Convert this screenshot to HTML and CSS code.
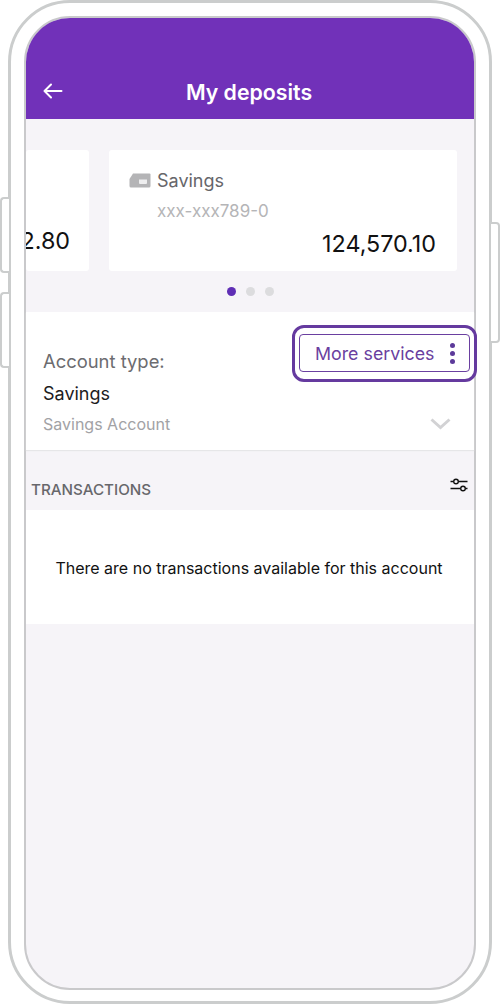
FILE: index.html
```html
<!DOCTYPE html>
<html lang="en">
<head>
  <meta charset="UTF-8" />
  <meta name="viewport" content="width=device-width, initial-scale=1" />
  <title>My deposits</title>
  <link rel="stylesheet" href="styles.css">
</head>
<body>
  <div class="phone">
    <span class="side-btn side-left-1"></span>
    <span class="side-btn side-left-2"></span>
    <span class="side-btn side-right"></span>

    <div class="screen">
      <div class="header">
        <svg class="back" width="20" height="16" viewBox="0 0 20 16" fill="none" stroke="#fff" stroke-width="2" stroke-linecap="round" stroke-linejoin="round">
          <path d="M1.5 8H18.5M8 1.5L1.5 8L8 14.5" />
        </svg>
        <div class="title">My deposits</div>
      </div>

      <div class="carousel">
        <div class="card card-prev">
          <div class="amount">2.80</div>
        </div>
        <div class="card card-main">
          <div class="card-name">
            <svg width="22" height="15" viewBox="0 0 22 15">
              <path d="M4 0.5H20.5Q21.5 0.5 21.5 1.5V13Q21.5 14.5 20 14.5H2Q0.5 14.5 0.5 13V6Z" fill="#b4b4b6" />
              <path d="M10 6.5H18V10Q18 11 17 11H11Q10 11 10 10Z" fill="#eeeeef" />
            </svg>
            <span>Savings</span>
          </div>
          <div class="card-number">xxx-xxx789-0</div>
          <div class="amount amount-main">124,570.10</div>
        </div>
      </div>

      <div class="dots">
        <span class="dot dot-active"></span>
        <span class="dot"></span>
        <span class="dot"></span>
      </div>

      <div class="account">
        <div class="account-info">
          <div class="account-label">Account type:</div>
          <div class="account-value">Savings</div>
          <div class="account-sub">Savings Account</div>
        </div>
        <div class="account-side">
          <button class="more-btn">
            More services
            <span class="kebab"><i></i><i></i><i></i></span>
          </button>
          <svg class="chevron" width="21" height="12" viewBox="0 0 21 12" fill="none" stroke="#d2d2d4" stroke-width="3">
            <path d="M1.5 1.5L10.5 9.5L19.5 1.5" />
          </svg>
        </div>
      </div>

      <div class="tx-head">
        <span>TRANSACTIONS</span>
        <svg width="18" height="14" viewBox="0 0 18 14" fill="none" stroke="#111" stroke-width="1.4">
          <path d="M0.5 3.5H3.5M8.5 3.5H17.5M0.5 10.5H10.5M15.5 10.5H17.5" />
          <circle cx="6" cy="3.5" r="2.3" />
          <circle cx="13" cy="10.5" r="2.3" />
        </svg>
      </div>

      <div class="tx-empty">There are no transactions available for this account</div>
    </div>
  </div>
</body>
</html>
```

FILE: styles.css
```css
body {
  margin: 0;
  background: #fff;
  font-family: 'Inter', 'Liberation Sans', sans-serif;
}
.phone {
  position: relative;
  box-sizing: border-box;
  width: 484px;
  height: 1004px;
  margin: 0 8px;
  padding: 13px 13px 11px;
  border: 3px solid #cbcdcd;
  border-radius: 62px;
}
.side-btn {
  position: absolute;
  width: 7px;
  border: 2px solid #cbcdcd;
  background: #fff;
}
.side-left-1,
.side-left-2 {
  left: -11px;
  height: 72px;
  border-right: none;
  border-radius: 4px 0 0 4px;
}
.side-left-1 { top: 194px; }
.side-left-2 { top: 289px; }
.side-right {
  right: -11px;
  top: 219px;
  height: 117px;
  border-left: none;
  border-radius: 0 4px 4px 0;
}
.screen {
  box-sizing: border-box;
  height: 100%;
  border: 2px solid #c9c9cb;
  border-radius: 46px;
  background: #f6f4f8;
}
.header {
  display: flex;
  align-items: center;
  justify-content: center;
  position: relative;
  height: 101px;
  padding: 46px 2px 0 0;
  box-sizing: border-box;
  background: #7131b9;
  border-radius: 44px 44px 0 0;
}
.back {
  position: absolute;
  left: 17px;
  top: 65px;
}
.title {
  color: #fff;
  font-size: 21.3px;
  font-weight: 600;
  line-height: 50px;
}
.carousel {
  display: flex;
  gap: 20px;
  height: 121px;
  margin: 31px 0 0;
  overflow: hidden;
}
.card {
  box-sizing: border-box;
  flex: none;
  height: 121px;
  background: #fff;
  border-radius: 3px;
}
.card-prev {
  display: flex;
  justify-content: flex-end;
  overflow: hidden;
  width: 63px;
  padding: 77px 19px 0 0;
}
.card-main {
  width: 348px;
  padding: 19px 21px 0 20px;
}
.card-name {
  display: flex;
  align-items: center;
  gap: 6px;
  height: 22px;
  color: #66666a;
  font-size: 18px;
}
.card-number {
  margin: 10px 0 0 28px;
  color: #b5b5b7;
  font-size: 17px;
  line-height: 20px;
}
.amount {
  color: #111;
  font-size: 23.3px;
  line-height: 28px;
  white-space: nowrap;
}
.amount-main {
  margin-top: 9px;
  text-align: right;
}
.dots {
  display: flex;
  justify-content: center;
  align-items: center;
  gap: 10px;
  height: 41px;
}
.dot {
  width: 9px;
  height: 9px;
  border-radius: 50%;
  background: #dcdcde;
}
.dot-active {
  background: #5f2eb5;
}
.account {
  display: flex;
  justify-content: space-between;
  box-sizing: border-box;
  height: 138px;
  padding: 22px 4px 0 17px;
  background: #fff;
  box-shadow: 0 1px 1px #e6e6e8;
}
.account-label {
  margin-top: 15px;
  color: #6c6c70;
  font-size: 18.4px;
  line-height: 24px;
}
.account-value {
  margin-top: 9px;
  color: #1c1c1e;
  font-size: 18px;
  line-height: 24px;
}
.account-sub {
  margin-top: 7px;
  color: #a2a2a5;
  font-size: 16px;
  line-height: 22px;
}
.account-side {
  display: flex;
  flex-direction: column;
  align-items: flex-end;
}
.more-btn {
  position: relative;
  display: flex;
  align-items: center;
  justify-content: space-between;
  box-sizing: border-box;
  width: 171px;
  height: 38px;
  padding: 0 14px 0 15px;
  border: 1px solid #6a3fa0;
  border-radius: 4px;
  background: #fff;
  color: #6a3fa0;
  font-family: inherit;
  font-size: 17.8px;
}
/* highlight ring drawn round the button */
.more-btn::after {
  content: "";
  position: absolute;
  inset: -10px -8px -11px -8px;
  border: 3.5px solid #653a9f;
  border-radius: 12px;
}
.kebab {
  display: flex;
  flex-direction: column;
  gap: 3px;
}
.kebab i {
  width: 5px;
  height: 5px;
  border-radius: 50%;
  background: #5c3a9a;
}
.chevron {
  margin: 46px 19px 0 0;
}
.tx-head {
  display: flex;
  align-items: center;
  justify-content: space-between;
  box-sizing: border-box;
  height: 60px;
  padding: 18px 6px 0 5px;
  color: #67676b;
  font-size: 15.2px;
  font-weight: 500;
}
.tx-head svg {
  margin-top: -9px;
}
.tx-empty {
  display: flex;
  justify-content: center;
  padding: 47px 2px 0 0;
  box-sizing: border-box;
  height: 114px;
  background: #fff;
  color: #111;
  font-size: 16px;
  line-height: 22px;
}
```
